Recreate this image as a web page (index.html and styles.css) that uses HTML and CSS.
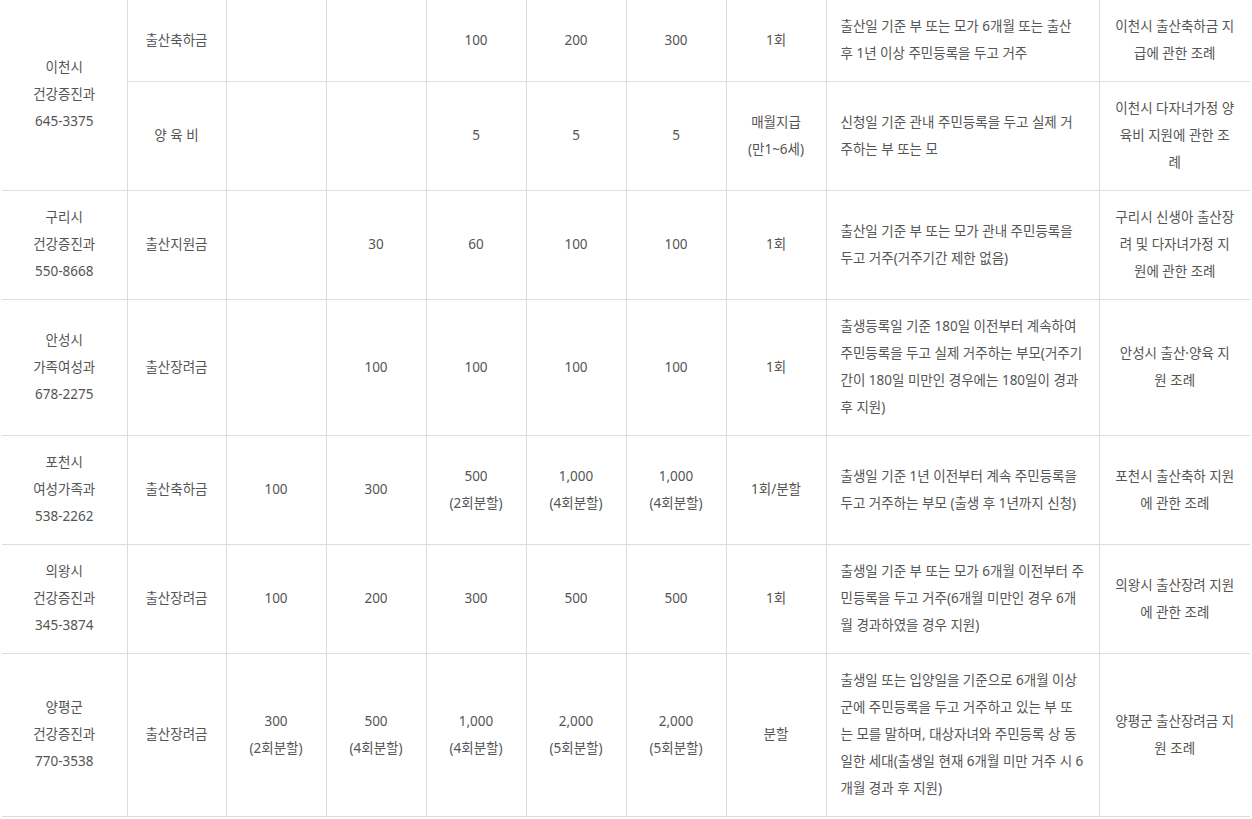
FILE: index.html
```html
<!DOCTYPE html>
<html lang="ko">
<head>
<meta charset="utf-8">
<title>출산지원금 현황</title>
<link rel="stylesheet" href="styles.css">
</head>
<body>
<table class="grid">
  <colgroup>
    <col class="c-dept">
    <col class="c-name">
    <col class="c-num">
    <col class="c-num">
    <col class="c-num">
    <col class="c-num">
    <col class="c-num">
    <col class="c-num">
    <col class="c-desc">
    <col class="c-law">
  </colgroup>
  <tbody>
    <tr>
      <td rowspan="2">이천시<br>건강증진과<br>645-3375</td>
      <td>출산축하금</td>
      <td></td>
      <td></td>
      <td>100</td>
      <td>200</td>
      <td>300</td>
      <td>1회</td>
      <td class="desc">출산일 기준 부 또는 모가 6개월 또는 출산<br>후 1년 이상 주민등록을 두고 거주</td>
      <td class="law">이천시 출산축하금 지<br>급에 관한 조례</td>
    </tr>
    <tr>
      <td>양 육 비</td>
      <td></td>
      <td></td>
      <td>5</td>
      <td>5</td>
      <td>5</td>
      <td>매월지급<br>(만1~6세)</td>
      <td class="desc">신청일 기준 관내 주민등록을 두고 실제 거<br>주하는 부 또는 모</td>
      <td class="law">이천시 다자녀가정 양<br>육비 지원에 관한 조<br>례</td>
    </tr>
    <tr>
      <td>구리시<br>건강증진과<br>550-8668</td>
      <td>출산지원금</td>
      <td></td>
      <td>30</td>
      <td>60</td>
      <td>100</td>
      <td>100</td>
      <td>1회</td>
      <td class="desc">출산일 기준 부 또는 모가 관내 주민등록을<br>두고 거주(거주기간 제한 없음)</td>
      <td class="law">구리시 신생아 출산장<br>려 및 다자녀가정 지<br>원에 관한 조례</td>
    </tr>
    <tr>
      <td>안성시<br>가족여성과<br>678-2275</td>
      <td>출산장려금</td>
      <td></td>
      <td>100</td>
      <td>100</td>
      <td>100</td>
      <td>100</td>
      <td>1회</td>
      <td class="desc">출생등록일 기준 180일 이전부터 계속하여<br>주민등록을 두고 실제 거주하는 부모(거주기<br>간이 180일 미만인 경우에는 180일이 경과<br>후 지원)</td>
      <td class="law">안성시 출산·양육 지<br>원 조례</td>
    </tr>
    <tr>
      <td>포천시<br>여성가족과<br>538-2262</td>
      <td>출산축하금</td>
      <td>100</td>
      <td>300</td>
      <td>500<br>(2회분할)</td>
      <td>1,000<br>(4회분할)</td>
      <td>1,000<br>(4회분할)</td>
      <td>1회/분할</td>
      <td class="desc">출생일 기준 1년 이전부터 계속 주민등록을<br>두고 거주하는 부모 (출생 후 1년까지 신청)</td>
      <td class="law">포천시 출산축하 지원<br>에 관한 조례</td>
    </tr>
    <tr>
      <td>의왕시<br>건강증진과<br>345-3874</td>
      <td>출산장려금</td>
      <td>100</td>
      <td>200</td>
      <td>300</td>
      <td>500</td>
      <td>500</td>
      <td>1회</td>
      <td class="desc">출생일 기준 부 또는 모가 6개월 이전부터 주<br>민등록을 두고 거주(6개월 미만인 경우 6개<br>월 경과하였을 경우 지원)</td>
      <td class="law">의왕시 출산장려 지원<br>에 관한 조례</td>
    </tr>
    <tr>
      <td>양평군<br>건강증진과<br>770-3538</td>
      <td>출산장려금</td>
      <td>300<br>(2회분할)</td>
      <td>500<br>(4회분할)</td>
      <td>1,000<br>(4회분할)</td>
      <td>2,000<br>(5회분할)</td>
      <td>2,000<br>(5회분할)</td>
      <td>분할</td>
      <td class="desc">출생일 또는 입양일을 기준으로 6개월 이상<br>군에 주민등록을 두고 거주하고 있는 부 또<br>는 모를 말하며, 대상자녀와 주민등록 상 동<br>일한 세대(출생일 현재 6개월 미만 거주 시 6<br>개월 경과 후 지원)</td>
      <td class="law">양평군 출산장려금 지<br>원 조례</td>
    </tr>
  </tbody>
</table>
</body>
</html>
```

FILE: styles.css
```css
html, body {
  margin: 0;
  padding: 0;
  background: #fff;
}

body {
  font-family: "Noto Sans", "Noto Sans CJK KR", sans-serif;
  font-size: 13.5px;
  color: #555;
}

.grid {
  margin: -1px 0 0 2px;
  width: 1248px;
  table-layout: fixed;
  border-collapse: collapse;
}

.c-dept { width: 125px; }
.c-name { width: 99px; }
.c-num { width: 100px; }
.c-desc { width: 273px; }
.c-law { width: 151px; }

.grid td {
  padding: 13px 4px 14px;
  line-height: 27px;
  text-align: center;
  vertical-align: middle;
  white-space: nowrap;
  border-top: 1px solid #ddd;
  border-bottom: 1px solid #ddd;
  border-right: 1px solid #ddd;
}

.grid td.desc {
  text-align: left;
  padding-left: 14px;
  padding-right: 4px;
}

.grid td.law {
  border-right: 0;
}
```
